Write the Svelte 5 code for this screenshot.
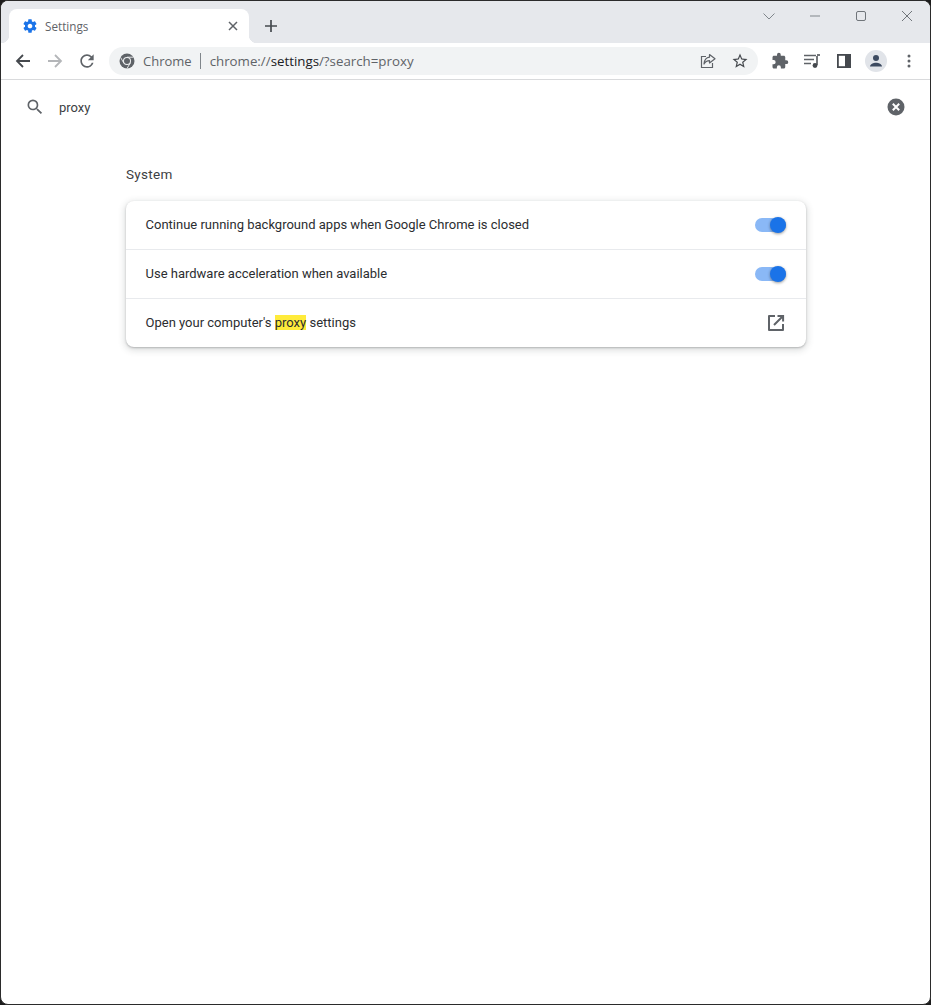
<script>
  const rows = [
    { text: 'Continue running background apps when Google Chrome is closed', toggle: true },
    { text: 'Use hardware acceleration when available', toggle: true }
  ];
</script>

<div class="window">
  <header class="tabstrip">
    <div class="tab">
      <svg class="fav" viewBox="0 0 24 24" width="16" height="16"><path fill="#1a73e8" d="M19.43 12.98c.04-.32.07-.64.07-.98s-.03-.66-.07-.98l2.11-1.65c.19-.15.24-.42.12-.64l-2-3.46c-.12-.22-.39-.3-.61-.22l-2.49 1c-.52-.4-1.08-.73-1.69-.98l-.38-2.65A.488.488 0 0 0 14 2h-4c-.25 0-.46.18-.49.42l-.38 2.65c-.61.25-1.17.59-1.69.98l-2.49-1c-.23-.09-.49 0-.61.22l-2 3.46c-.13.22-.07.49.12.64l2.11 1.65c-.04.32-.07.65-.07.98s.03.66.07.98l-2.11 1.65c-.19.15-.24.42-.12.64l2 3.46c.12.22.39.3.61.22l2.49-1c.52.4 1.08.73 1.69.98l.38 2.65c.03.24.24.42.49.42h4c.25 0 .46-.18.49-.42l.38-2.65c.61-.25 1.17-.59 1.69-.98l2.49 1c.23.09.49 0 .61-.22l2-3.46c.12-.22.07-.49-.12-.64l-2.11-1.65zM12 15.5c-1.93 0-3.5-1.57-3.5-3.5s1.57-3.5 3.5-3.5 3.5 1.57 3.5 3.5-1.57 3.5-3.5 3.5z"/></svg>
      <span class="tabtitle">Settings</span>
      <svg class="tabclose" viewBox="0 0 10 10" width="10" height="10"><path d="M1 1l8 8M9 1l-8 8" stroke="#5f6368" stroke-width="1.5" fill="none"/></svg>
    </div>
    <svg class="newtab" viewBox="0 0 14 14" width="14" height="14"><path d="M7 1v12M1 7h12" stroke="#45494e" stroke-width="1.7" fill="none"/></svg>
    <div class="caption">
      <svg viewBox="0 0 14 14" width="14" height="14"><path d="M1.5 4.5L7 10l5.500-5.500" stroke="#80868b" stroke-width="1" fill="none"/></svg>
      <svg viewBox="0 0 12 12" width="12" height="12"><path d="M1 6h10" stroke="#80868b" stroke-width="1" fill="none"/></svg>
      <svg viewBox="0 0 12 12" width="12" height="12"><rect x="1.5" y="1.5" width="9" height="9" rx="1.5" stroke="#70757a" stroke-width="1" fill="none"/></svg>
      <svg viewBox="0 0 12 12" width="12" height="12"><path d="M1 1l10 10M11 1L1 11" stroke="#70757a" stroke-width="1" fill="none"/></svg>
    </div>
  </header>

  <nav class="toolbar">
    <svg class="navbtn" viewBox="0 0 16 16" width="16" height="16"><path d="M15 8H2M8 2L2 8l6 6" stroke="#45494e" stroke-width="1.8" fill="none"/></svg>
    <svg class="navbtn fwd" viewBox="0 0 16 16" width="16" height="16"><path d="M1 8h13M8 2l6 6-6 6" stroke="#b4b6b9" stroke-width="1.8" fill="none"/></svg>
    <svg class="navbtn rel" viewBox="0 0 24 24" width="20" height="20"><path fill="#5f6368" d="M17.65 6.35A7.958 7.958 0 0 0 12 4c-4.42 0-7.99 3.58-7.99 8s3.57 8 7.99 8c3.73 0 6.84-2.55 7.73-6h-2.08A5.99 5.99 0 0 1 12 18c-3.31 0-6-2.69-6-6s2.69-6 6-6c1.66 0 3.14.69 4.22 1.78L13 11h7V4l-2.35 2.35z"/></svg>
    <div class="omnibox">
      <svg class="chromeicon" viewBox="0 0 16 16" width="16" height="16">
        <circle cx="8" cy="8" r="7.5" fill="#5f6368"/>
        <path d="M8 4.200h6.400M4.700 9.900L1.500 4.300M11.300 9.900L8 15.500" stroke="#f1f3f4" stroke-width=".9" fill="none"/>
        <circle cx="8" cy="8" r="4" fill="#f1f3f4"/>
        <circle cx="8" cy="8" r="3" fill="#5f6368"/>
      </svg>
      <span class="chip">Chrome</span>
      <span class="sep"></span>
      <span class="url">chrome://<b>settings</b>/?search=proxy</span>
      <svg class="share" viewBox="0 0 16 16" width="16" height="16"><path d="M6 3.500H1.500v11h11V10" stroke="#5f6368" stroke-width="1.2" fill="none"/><path d="M9.500 1.500l5.500 4.300-5.500 4.200V7.600C7 7.600 5.300 8.600 4 11c.3-3.600 2.300-6.400 5.500-6.800z" stroke="#5f6368" stroke-width="1.2" fill="none" stroke-linejoin="round"/></svg>
      <svg class="star" viewBox="0 0 24 24" width="18" height="18"><path fill="#45494e" d="M22 9.240l-7.190-.620L12 2 9.190 8.630 2 9.240l5.460 4.730L5.820 21 12 17.270 18.180 21l-1.630-7.030L22 9.240zM12 15.400l-3.760 2.270 1-4.280-3.320-2.880 4.380-.380L12 6.100l1.710 4.040 4.380.380-3.320 2.880 1 4.280L12 15.400z"/></svg>
    </div>
    <div class="tools">
      <svg viewBox="0 0 24 24" width="18" height="18"><path fill="#5f6368" d="M20.500 11H19V7c0-1.100-.9-2-2-2h-4V3.500a2.500 2.500 0 0 0-5 0V5H4c-1.100 0-2 .9-2 2v3.800h1.500a2.700 2.700 0 0 1 0 5.400H2V20c0 1.100.9 2 2 2h3.800v-1.500a2.700 2.700 0 0 1 5.400 0V22H17c1.100 0 2-.9 2-2v-4h1.500a2.500 2.500 0 0 0 0-5z"/></svg>
      <svg class="queue" viewBox="0 0 16 16" width="16" height="16"><path d="M0 2.500h12M0 6.500h10M0 10.500h7" stroke="#5f6368" stroke-width="1.3" fill="none"/><path d="M13 3v9" stroke="#45494e" stroke-width="1.5"/><path d="M13 2h3" stroke="#45494e" stroke-width="1.5"/><circle cx="11" cy="12.500" r="2.400" fill="#45494e"/></svg>
      <svg class="panel" viewBox="0 0 14 14" width="14" height="14"><rect x=".9" y=".9" width="12.200" height="12.200" fill="#fff" stroke="#45494e" stroke-width="1.8"/><rect x="8" y="1" width="5" height="12" fill="#45494e"/></svg>
      <span class="avatar"><svg viewBox="0 0 16 16" width="16" height="16"><circle cx="8" cy="5" r="3" fill="#3c4a60"/><path d="M2 13.500c0-2.500 3.500-3.800 6-3.800s6 1.300 6 3.800z" fill="#3c4a60"/></svg></span>
      <svg class="dots" viewBox="0 0 4 14" width="4" height="14"><circle cx="2" cy="2" r="1.5" fill="#5f6368"/><circle cx="2" cy="7" r="1.5" fill="#5f6368"/><circle cx="2" cy="12" r="1.5" fill="#5f6368"/></svg>
    </div>
  </nav>

  <main class="page">
    <div class="searchbar">
      <svg viewBox="0 0 24 24" width="20" height="20"><path fill="#5f6368" d="M15.500 14h-.790l-.280-.270A6.471 6.471 0 0 0 16 9.500 6.500 6.500 0 1 0 9.500 16c1.610 0 3.090-.590 4.230-1.570l.270.280v.790l5 4.990L20.490 19l-4.990-5zm-6 0C7.010 14 5 11.990 5 9.500S7.010 5 9.500 5 14 7.010 14 9.500 11.990 14 9.500 14z"/></svg>
      <span class="query">proxy</span>
      <svg class="clear" viewBox="0 0 18 18" width="18" height="18"><circle cx="9" cy="9" r="8.500" fill="#5f6368"/><path d="M5.800 5.800l6.400 6.400M12.200 5.800l-6.400 6.400" stroke="#fff" stroke-width="2" fill="none"/></svg>
    </div>

    <section class="content">
      <h2>System</h2>
      <div class="card">
        {#each rows as row}
          <div class="row">
            <span class="label">{row.text}</span>
            <span class="toggle"><span class="knob"></span></span>
          </div>
        {/each}
        <div class="row">
          <span class="label">Open your computer's <mark>proxy</mark> settings</span>
          <svg class="ext" viewBox="0 0 18 18" width="18" height="18"><path d="M8 2H2v14h14v-6" stroke="#5f6368" stroke-width="2" fill="none" stroke-linejoin="round"/><path d="M10.500 1.900H16.100V7.500M16 2L7 11" stroke="#5f6368" stroke-width="2" fill="none"/></svg>
        </div>
      </div>
    </section>
  </main>
</div>

<style>
  :global(body) { margin: 0; background: #1c1c1c; }
  .window {
    box-sizing: border-box;
    width: 931px;
    height: 1005px;
    display: flex;
    flex-direction: column;
    background: #fff;
    border: 1px solid #2b2b2b;
    border-radius: 8px;
    overflow: hidden;
  }
  svg { display: block; flex: none; }

  .tabstrip {
    height: 42px;
    flex: none;
    background: #e6e8ec;
    display: flex;
    align-items: flex-end;
    position: relative;
  }
  .tab {
    width: 240px;
    height: 34px;
    margin-left: 8px;
    background: #fff;
    border-radius: 8px 8px 0 0;
    display: flex;
    align-items: center;
    box-sizing: border-box;
    padding: 0 11px 0 13px;
    position: relative;
  }
  .tab::before, .tab::after {
    content: "";
    position: absolute;
    bottom: 0;
    width: 8px;
    height: 8px;
  }
  .tab::before { left: -8px; background: radial-gradient(circle at 0 0, #e6e8ec 8px, #fff 8.5px); }
  .tab::after { right: -8px; background: radial-gradient(circle at 100% 0, #e6e8ec 8px, #fff 8.5px); }
  .tabtitle {
    margin-left: 7px;
    font: 11.7px "Open Sans", "Noto Sans", sans-serif;
    color: #5f6368;
    flex: 1;
  }
  .newtab { margin: 0 0 10px 15px; }
  .caption {
    position: absolute;
    top: 8px;
    right: 17px;
    display: flex;
    align-items: center;
    gap: 34px;
  }
  .caption svg:first-child { margin-right: -1px; }

  .toolbar {
    height: 36px;
    flex: none;
    background: #fff;
    border-bottom: 1px solid #d9dadc;
    display: flex;
    align-items: center;
    padding-left: 14px;
  }
  .fwd { margin-left: 16px; }
  .rel { margin-left: 14px; }
  .omnibox {
    margin-left: 12px;
    width: 649px;
    height: 28px;
    border-radius: 14px;
    background: #f1f3f4;
    display: flex;
    align-items: center;
    padding-left: 10px;
    box-sizing: border-box;
    position: relative;
  }
  .chip {
    margin-left: 8px;
    font: 13px "Open Sans", "Noto Sans", sans-serif;
    color: #5f6368;
  }
  .sep { width: 1px; height: 16px; background: #80868b; margin: 0 9px 0 8px; }
  .url {
    font: 13.3px "Open Sans", "Noto Sans", sans-serif;
    color: #5f6368;
    flex: 1;
  }
  .url b { font-weight: 400; color: #202124; }
  .share { margin-right: 15px; }
  .star { margin-right: 9px; }
  .tools {
    display: flex;
    align-items: center;
    margin-left: 13px;
    gap: 15px;
  }
  .panel { margin-left: 2px; }
  .avatar {
    width: 22px;
    height: 22px;
    margin-left: -1px;
    border-radius: 50%;
    background: #e1e4e9;
    display: flex;
    align-items: center;
    justify-content: center;
  }
  .dots { margin-left: 5px; }

  .page {
    flex: 1;
    font-family: Roboto, sans-serif;
    color: #202124;
  }
  .searchbar {
    display: flex;
    align-items: center;
    height: 54px;
    padding: 0 25px 0 24px;
    box-sizing: border-box;
  }
  .query { margin-left: 14px; font-size: 13px; flex: 1; color: #3c4043; }
  .content { width: 680px; margin-left: 125px; }
  h2 {
    margin: 32px 0 0;
    font-size: 13.5px;
    font-weight: 400;
    line-height: 16px;
    letter-spacing: .3px;
    color: #3c4043;
  }
  .card {
    margin-top: 19px;
    border-radius: 8px;
    background: #fff;
    box-shadow: 0 1px 2px rgba(60,64,67,.3), 0 2px 6px 2px rgba(60,64,67,.15);
  }
  .row {
    height: 49px;
    box-sizing: border-box;
    display: flex;
    align-items: center;
    justify-content: space-between;
    padding: 0 20px;
    font-size: 13px;
    border-top: 1px solid #e8eaed;
  }
  .row:first-child { border-top: 0; height: 48px; }
  .label { margin: -2px 0 0 -.5px; color: #2b2d30; }
  mark { background: #ffeb3b; color: inherit; }
  .toggle {
    width: 31px;
    height: 14px;
    border-radius: 7px;
    background: #8ab8f6;
    position: relative;
  }
  .knob {
    position: absolute;
    right: 0;
    top: -1px;
    width: 16px;
    height: 16px;
    border-radius: 50%;
    background: #1a73e8;
    box-shadow: 0 1px 3px rgba(0,0,0,.4);
  }
  .ext { margin-right: 1px; }
</style>
